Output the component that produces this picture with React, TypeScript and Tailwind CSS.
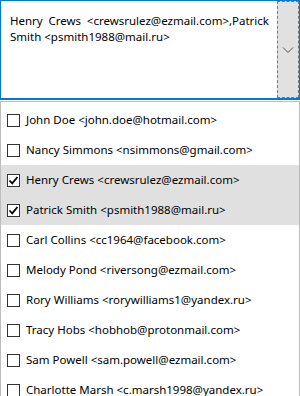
const contacts = [
  { name: 'John Doe', email: 'john.doe@hotmail.com', checked: false },
  { name: 'Nancy Simmons', email: 'nsimmons@gmail.com', checked: false },
  { name: 'Henry Crews', email: 'crewsrulez@ezmail.com', checked: true },
  { name: 'Patrick Smith', email: 'psmith1988@mail.ru', checked: true },
  { name: 'Carl Collins', email: 'cc1964@facebook.com', checked: false },
  { name: 'Melody Pond', email: 'riversong@ezmail.com', checked: false },
  { name: 'Rory Williams', email: 'rorywilliams1@yandex.ru', checked: false },
  { name: 'Tracy Hobs', email: 'hobhob@protonmail.com', checked: false },
  { name: 'Sam Powell', email: 'sam.powell@ezmail.com', checked: false },
  { name: 'Charlotte Marsh', email: 'c.marsh1998@yandex.ru', checked: false },
]

function CheckBox({ checked }: { checked: boolean }) {
  return (
    <span className="flex h-[13px] w-[13px] shrink-0 items-center justify-center border border-[#333333] bg-white">
      {checked && (
        <svg width="11" height="11" viewBox="0 0 11 11">
          <path d="M1.5 5.5 L4.2 8.3 L9.5 2" fill="none" stroke="#000" strokeWidth="1.8" />
        </svg>
      )}
    </span>
  )
}

export default function App() {
  const selected = contacts.filter((c) => c.checked)
  return (
    <div
      className="flex h-[396px] w-[300px] flex-col overflow-hidden bg-white text-[11.5px] text-black"
      style={{ fontFamily: '"Noto Sans", "Open Sans", sans-serif' }}
    >
      <div className="flex h-[100px] shrink-0 border-x border-t border-b-2 border-[#0078d7] bg-white">
        <p className="flex-1 pl-[9px] pr-[8px] pt-[12px] text-justify leading-[16px]">
          {selected.map((c) => `${c.name} <${c.email}>`).join(',')}
        </p>
        <div className="flex w-[22px] shrink-0 items-center justify-center border border-dashed border-[#777] bg-[#e1e1e1]">
          <svg width="12" height="8" viewBox="0 0 12 8">
            <path d="M1 1.5 L6 6.5 L11 1.5" fill="none" stroke="#555" strokeWidth="1" />
          </svg>
        </div>
      </div>
      <div className="mt-[1px] flex-1 border border-[#bdbdbd] pt-[3px]">
        {contacts.map((c) => (
          <div
            key={c.email}
            className={`flex h-[30px] items-center gap-[6px] pl-[6px] ${c.checked ? 'bg-[#e0e0e0]' : ''}`}
          >
            <CheckBox checked={c.checked} />
            <span className="whitespace-nowrap">
              {c.name} &lt;{c.email}&gt;
            </span>
          </div>
        ))}
      </div>
    </div>
  )
}
